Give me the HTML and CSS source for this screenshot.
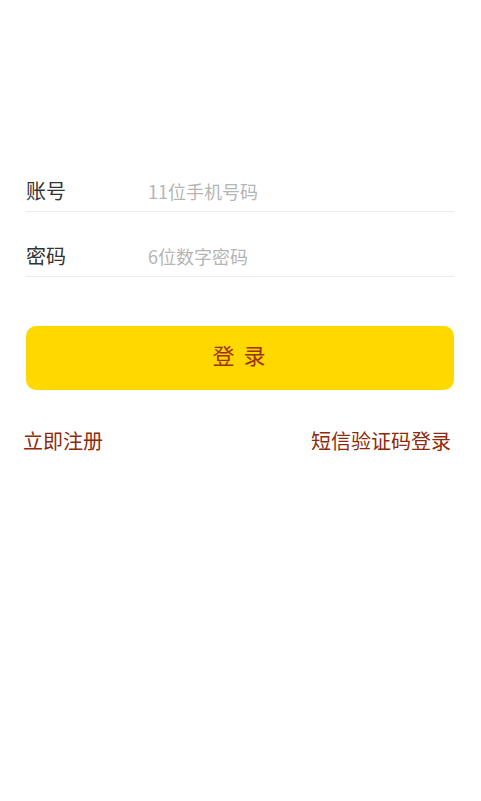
FILE: index.html
```html
<!DOCTYPE html>
<html lang="zh-CN">
<head>
<meta charset="utf-8">
<title>登录</title>
<link rel="stylesheet" href="styles.css">
</head>
<body>
<main class="page">
  <form class="login-form">
    <label class="field">
      <span class="field-label">账号</span>
      <input class="field-input" type="tel" placeholder="11位手机号码">
    </label>
    <label class="field">
      <span class="field-label">密码</span>
      <input class="field-input" type="password" placeholder="6位数字密码">
    </label>
    <button class="submit" type="button">登 录</button>
  </form>
  <nav class="links">
    <a class="link" href="#">立即注册</a>
    <a class="link" href="#">短信验证码登录</a>
  </nav>
</main>
</body>
</html>
```
FILE: styles.css
```css
html, body {
  margin: 0;
  padding: 0;
  background: #ffffff;
}
body {
  font-family: "Noto Sans CJK SC", "Noto Sans", sans-serif;
  width: 481px;
  height: 801px;
}
.page {
  padding-top: 147px;
}
.login-form {
  display: flex;
  flex-direction: column;
  padding: 0 27px 0 26px;
}
.field {
  display: flex;
  align-items: center;
  height: 40px;
  margin-top: 24px;
  border-bottom: 1px solid #ebebeb;
}
.field-label {
  width: 122px;
  flex: none;
  font-size: 20px;
  line-height: 40px;
  color: #333333;
}
.field-input {
  flex: 1;
  min-width: 0;
  border: none;
  outline: none;
  padding: 0;
  background: transparent;
  font-family: inherit;
  font-size: 18px;
  line-height: 40px;
  height: 40px;
  color: #333333;
}
.field-input::placeholder {
  color: #b5b5b5;
}
.submit {
  margin-top: 49px;
  height: 64px;
  border: none;
  border-radius: 10px;
  background: #ffd800;
  color: #a03000;
  font-family: inherit;
  font-size: 22px;
  line-height: 30px;
  letter-spacing: 2px;
  padding: 0 0 8px;
}
.links {
  display: flex;
  justify-content: space-between;
  margin-top: 37px;
  padding: 0 30px 0 23px;
}
.link {
  font-size: 20px;
  line-height: 28px;
  color: #8e2a0c;
  text-decoration: none;
}
```
